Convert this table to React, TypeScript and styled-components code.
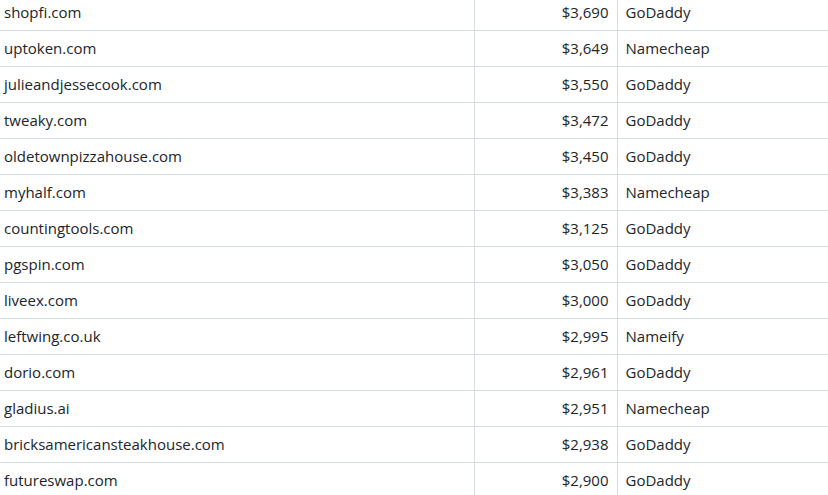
import React from "react";
import styled, { createGlobalStyle } from "styled-components";

const Global = createGlobalStyle`
  html, body { margin: 0; padding: 0; background: #fff; overflow: hidden; }
  body { font-family: "Open Sans", "Liberation Sans", sans-serif; }
`;

const Table = styled.table`
  border-collapse: collapse;
  margin: -6px 0 0 -4px;
  width: 840px;
  table-layout: fixed;
  font-size: 15px;
  color: #212529;
`;

const Row = styled.tr`
  height: 36px;
  border-bottom: 1px solid #d5dce4;
`;

const Cell = styled.td<{ $align?: "left" | "right"; $divider?: boolean }>`
  padding: 0 8px;
  height: 35px;
  text-align: ${(p) => p.$align ?? "left"};
  border-left: ${(p) => (p.$divider ? "1px solid #d5dce4" : "none")};
  white-space: nowrap;
  vertical-align: middle;
`;

const rows: [string, string, string][] = [
  ["shopfi.com", "$3,690", "GoDaddy"],
  ["uptoken.com", "$3,649", "Namecheap"],
  ["julieandjessecook.com", "$3,550", "GoDaddy"],
  ["tweaky.com", "$3,472", "GoDaddy"],
  ["oldetownpizzahouse.com", "$3,450", "GoDaddy"],
  ["myhalf.com", "$3,383", "Namecheap"],
  ["countingtools.com", "$3,125", "GoDaddy"],
  ["pgspin.com", "$3,050", "GoDaddy"],
  ["liveex.com", "$3,000", "GoDaddy"],
  ["leftwing.co.uk", "$2,995", "Nameify"],
  ["dorio.com", "$2,961", "GoDaddy"],
  ["gladius.ai", "$2,951", "Namecheap"],
  ["bricksamericansteakhouse.com", "$2,938", "GoDaddy"],
  ["futureswap.com", "$2,900", "GoDaddy"],
];

export default function App() {
  return (
    <>
      <Global />
      <Table>
        <colgroup>
          <col style={{ width: 478 }} />
          <col style={{ width: 143 }} />
          <col />
        </colgroup>
        <tbody>
          {rows.map(([d, p, r]) => (
            <Row key={d}>
              <Cell>{d}</Cell>
              <Cell $align="right" $divider>
                {p}
              </Cell>
              <Cell $divider>{r}</Cell>
            </Row>
          ))}
        </tbody>
      </Table>
    </>
  );
}
